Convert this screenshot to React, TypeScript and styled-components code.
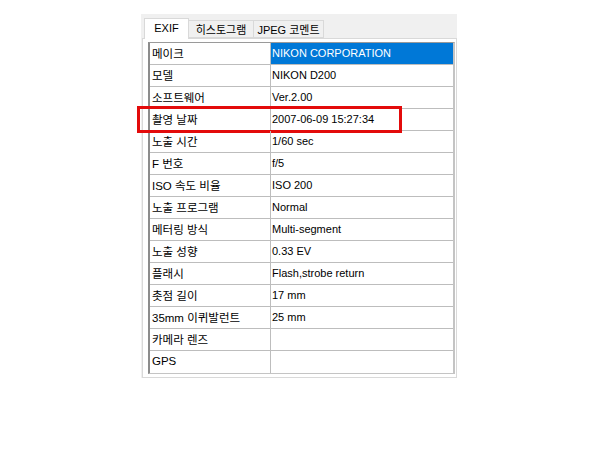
import styled, { createGlobalStyle } from 'styled-components'

const GlobalStyle = createGlobalStyle`
    html, body {
        margin: 0;
        background: #ffffff;
    }
    body {
        font-family: 'Liberation Sans', 'Noto Sans CJK KR', sans-serif;
    }
`

const PageStyled = styled.div`
    padding: 14px 0 0 141px;
    width: 600px;
    height: 452px;
    box-sizing: border-box;
`

const PanelStyled = styled.div`
    width: 316px;
    background-color: #f0f0f0;
    display: flex;
    flex-direction: column;
`

const TabStripStyled = styled.div`
    height: 24px;
    display: flex;
    align-items: flex-end;
    padding-left: 3px;
`

const TabStyled = styled.div<{ $width: number; $active?: boolean }>`
    width: ${(p) => p.$width}px;
    height: ${(p) => (p.$active ? 21 : 18)}px;
    margin-bottom: ${(p) => (p.$active ? -1 : 0)}px;
    box-sizing: border-box;
    border: 1px solid #d9d9d9;
    border-bottom: ${(p) => (p.$active ? 'none' : '1px solid #d9d9d9')};
    border-left: ${(p) => (p.$active ? '1px solid #d9d9d9' : 'none')};
    background-color: ${(p) => (p.$active ? '#ffffff' : '#f0f0f0')};
    position: relative;
    z-index: ${(p) => (p.$active ? 1 : 0)};
    display: flex;
    align-items: center;
    justify-content: center;
    padding-bottom: ${(p) => (p.$active ? 2 : 1)}px;
    font-size: 11px;
    color: #000000;
    white-space: nowrap;
`

const TabPageStyled = styled.div`
    margin-left: 1px;
    background-color: #ffffff;
    border: 1px solid #d9d9d9;
    padding: 3px 1px 3px 5px;
`

const GridStyled = styled.div`
    border-top: 1px solid #9a9a9a;
    border-left: 2px solid #8c8c8c;
    border-right: 2px solid #c4c4c4;
    border-bottom: 1px solid #c4c4c4;
`

const RowStyled = styled.div`
    height: 22px;
    box-sizing: border-box;
    display: grid;
    grid-template-columns: 121px 1fr;
    border-bottom: 1px solid #bdbdbd;
    position: relative;
    &:last-child {
        border-bottom: none;
    }
`

const CellStyled = styled.div<{ $label?: boolean; $selected?: boolean }>`
    display: flex;
    align-items: center;
    padding: 0 0 2px ${(p) => (p.$label ? 2 : 1)}px;
    box-sizing: border-box;
    border-right: ${(p) => (p.$label ? '1px solid #bdbdbd' : 'none')};
    background-color: ${(p) => (p.$selected ? '#0078d7' : 'transparent')};
    color: ${(p) => (p.$selected ? '#ffffff' : '#000000')};
    font-size: ${(p) => (p.$label ? 11.5 : 11)}px;
    white-space: nowrap;
    overflow: hidden;
`

const HighlightStyled = styled.div`
    position: absolute;
    left: -13px;
    top: -3px;
    width: 265px;
    height: 27px;
    box-sizing: border-box;
    border: 3px solid #e30b0b;
    pointer-events: none;
`

const tabs = [
    { label: 'EXIF', width: 45, active: true },
    { label: '히스토그램', width: 65 },
    { label: 'JPEG 코멘트', width: 70 },
]

const rows: [string, string][] = [
    ['메이크', 'NIKON CORPORATION'],
    ['모델', 'NIKON D200'],
    ['소프트웨어', 'Ver.2.00'],
    ['촬영 날짜', '2007-06-09 15:27:34'],
    ['노출 시간', '1/60 sec'],
    ['F 번호', 'f/5'],
    ['ISO 속도 비율', 'ISO 200'],
    ['노출 프로그램', 'Normal'],
    ['메터링 방식', 'Multi-segment'],
    ['노출 성향', '0.33 EV'],
    ['플래시', 'Flash,strobe return'],
    ['촛점 길이', '17 mm'],
    ['35mm 이퀴발런트', '25 mm'],
    ['카메라 렌즈', ''],
    ['GPS', ''],
]

export default function App() {
    return (
        <>
            <GlobalStyle />
            <PageStyled>
                <PanelStyled>
                    <TabStripStyled>
                        {tabs.map((t) => (
                            <TabStyled key={t.label} $width={t.width} $active={t.active}>
                                {t.label}
                            </TabStyled>
                        ))}
                    </TabStripStyled>
                    <TabPageStyled>
                        <GridStyled>
                            {rows.map(([label, value], i) => (
                                <RowStyled key={label}>
                                    <CellStyled $label>{label}</CellStyled>
                                    <CellStyled $selected={i === 0}>{value}</CellStyled>
                                    {i === 3 && <HighlightStyled />}
                                </RowStyled>
                            ))}
                        </GridStyled>
                    </TabPageStyled>
                </PanelStyled>
            </PageStyled>
        </>
    )
}
